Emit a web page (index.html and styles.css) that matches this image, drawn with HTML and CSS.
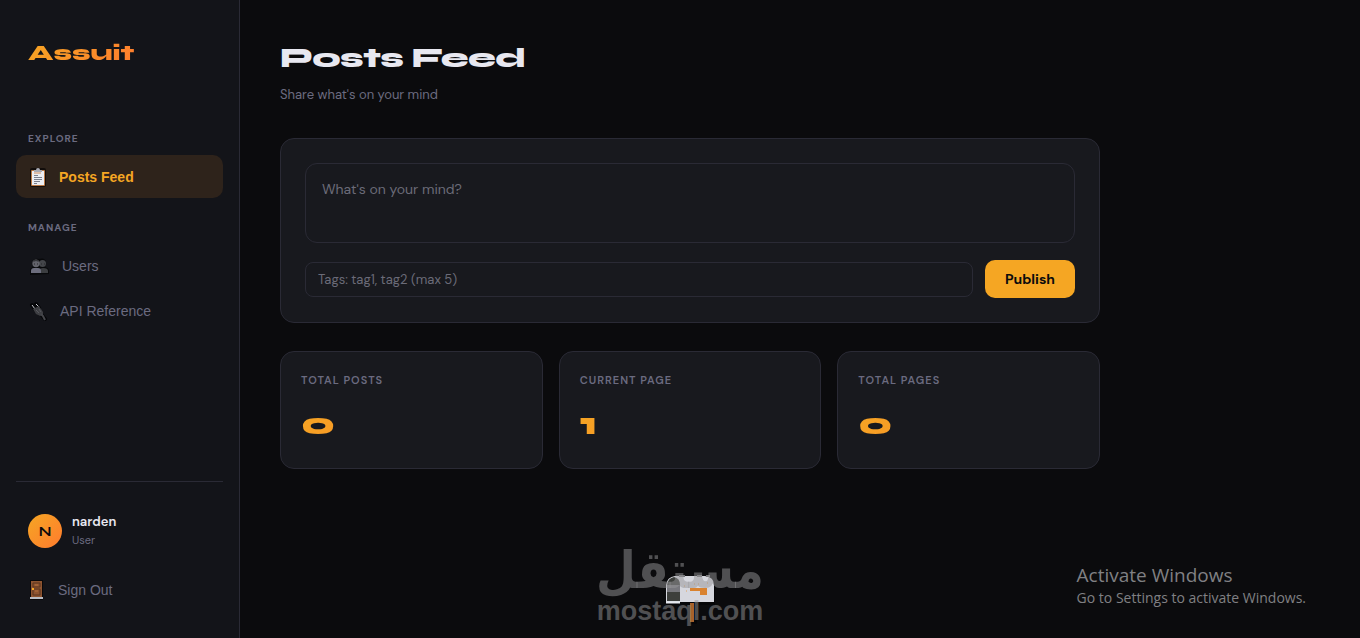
FILE: index.html
```html
<!DOCTYPE html>
<html lang="en">
<head>
    <meta charset="UTF-8">
    <title>Assuit - Posts Feed</title>
    <meta name="viewport" content="width=device-width, initial-scale=1.0">
    <link rel="stylesheet" href="styles.css">
</head>
<body>
    <div class="app">
        <aside class="sidebar">
            <div class="logo"><span class="gradient-text">Assuit</span></div>

            <nav class="nav">
                <div class="nav-label">Explore</div>
                <button type="button" class="nav-item active">
                    <svg width="19" height="20" viewBox="0 0 19 20">
                        <rect x="2" y="1" width="16" height="19" rx="2" fill="#120d0b"/>
                        <rect x="3" y="3" width="14" height="16" rx="1" fill="#b87845"/>
                        <rect x="4" y="4" width="12" height="14" fill="#eceef4"/>
                        <path d="M6 5V3h2q0-2 2-2t2 2h2v2z" fill="#a9abb5"/>
                        <path d="M6 6h7" stroke="#d08c5c"/>
                        <path d="M6 8.500h4M6 10.500h8M6 12.500h8M6 14.500h6M6 16.500h3" stroke="#7b7f8d"/>
                    </svg>
                    <span>Posts Feed</span>
                </button>

                <div class="nav-label">Manage</div>
                <button type="button" class="nav-item">
                    <svg width="22" height="18" viewBox="0 0 22 18">
                        <path d="M2 18v-4q0-3 3-4-1-2-1-4 1-5 7-4 6-2 7 3 0 3-1 5 4 1 4 4v3z" fill="#08090b"/>
                        <circle cx="14.500" cy="6.500" r="3.500" fill="#44464a"/>
                        <path d="M11 16v-3q1-2 4-2 5 0 5 3v2z" fill="#3c3e41"/>
                        <circle cx="8" cy="6.500" r="3.700" fill="#62636b"/>
                        <path d="M5 5q1-3 3-3t3 3l-3-1z" fill="#35363a"/>
                        <path d="M3 16v-2q0-3 3-3h4q3 0 3 3v2z" fill="#6c6d7d"/>
                        <path d="M6 7h1M9 7h1M13 7h1M16 7h1" stroke="#26272b"/>
                    </svg>
                    <span>Users</span>
                </button>
                <button type="button" class="nav-item">
                    <svg width="20" height="20" viewBox="0 0 20 20">
                        <path d="M4 4l3 4M8 3l3 4M7 8l5 5M12 12l5 6" stroke="#050608" stroke-width="4" stroke-linecap="round"/>
                        <path d="M4 4l3 4M8 3l3 3" stroke="#c9cad2" stroke-width="1"/>
                        <path d="M5 8l6-3 4 6 0 3-3 1-4-2z" fill="#3d3e42"/>
                        <path d="M13 13l2 2 2 4" stroke="#45464b" stroke-width="2" fill="none"/>
                        <path d="M8 9l3 3M11 8l2 3" stroke="#56575d"/>
                    </svg>
                    <span>API Reference</span>
                </button>
            </nav>

            <div class="sidebar-footer">
                <div class="user">
                    <div class="avatar">N</div>
                    <div class="user-info">
                        <div class="user-name">narden</div>
                        <div class="user-role">User</div>
                    </div>
                </div>
                <button type="button" class="nav-item">
                    <svg width="18" height="20" viewBox="0 0 18 20">
                        <rect x="2" y="0" width="13" height="20" fill="#08080a"/>
                        <rect x="3" y="1" width="11" height="16" fill="#8e5430"/>
                        <path d="M5 3h7v4H5zM5 9h7v6H5z" fill="none" stroke="#59341f"/>
                        <path d="M7 5h3M7 11h3" stroke="#b3713d"/>
                        <rect x="4" y="8" width="2" height="2" fill="#f5a623"/>
                        <path d="M2 18h13" stroke="#b9bdc4" stroke-width="2"/>
                    </svg>
                    <span>Sign Out</span>
                </button>
            </div>
        </aside>

        <main class="main">
            <header class="page-header">
                <h1>Posts Feed</h1>
                <p>Share what's on your mind</p>
            </header>

            <form class="card compose">
                <textarea class="compose-text" aria-label="Post text" placeholder="What's on your mind?"></textarea>
                <div class="compose-row">
                    <input type="text" class="tags-input" aria-label="Tags" placeholder="Tags: tag1, tag2 (max 5)">
                    <button type="button" class="publish-btn">Publish</button>
                </div>
            </form>

            <section class="stats">
                <div class="card stat">
                    <div class="stat-label">Total Posts</div>
                    <div class="stat-value gradient-text">0</div>
                </div>
                <div class="card stat">
                    <div class="stat-label">Current Page</div>
                    <div class="stat-value gradient-text">1</div>
                </div>
                <div class="card stat">
                    <div class="stat-label">Total Pages</div>
                    <div class="stat-value gradient-text">0</div>
                </div>
            </section>

            <div class="empty">
                <svg width="54" height="52" viewBox="0 0 54 52">
                    <path d="M3 30V11q0-8 7-9h33q9 1 9 9v20H34v19h-7V31H3z" fill="#060608"/>
                    <rect x="27" y="29" width="4" height="19" fill="#a8622b"/>
                    <path d="M3 28V11q1-8 9-9h30q9 1 9 9v17z" fill="#d6d7de"/>
                    <path d="M4 27V11q1-7 7-8 6 1 6 8v16z" fill="#3d3f3c"/>
                    <path d="M4 11h13v7H4z" fill="#77777d"/>
                    <path d="M3 28.500h14" stroke="#e6e8ee" stroke-width="2"/>
                    <path d="M27 14h17v7h-7v-4H27z" fill="#d9822f"/>
                    <path d="M16 2h6M34 2h5M43 2h4" stroke="#77777a" stroke-width="2"/>
                    <path d="M31 10h1M35 10h1M21 12h1M44 9h1M23 17h1" stroke="#e0a15c"/>
                </svg>
            </div>
        </main>
    </div>

    <div class="watermark">
        <div class="watermark-ar" lang="ar" dir="rtl">مستقل</div>
        <div class="watermark-en">mostaql.com</div>
    </div>

    <div class="activate">
        <div class="activate-title">Activate Windows</div>
        <div class="activate-text">Go to Settings to activate Windows.</div>
    </div>
</body>
</html>
```

FILE: styles.css
```css
* {
    box-sizing: border-box;
    margin: 0;
    padding: 0;
}
body {
    font-family: "DM Sans", Inter, sans-serif;
    background-color: #0b0b0d;
    color: #e8e8f0;
    overflow: hidden;
}
.app {
    display: flex;
    height: 100vh;
}
.gradient-text {
    background: linear-gradient(135deg, #f5a623, #ff7b2e);
    -webkit-background-clip: text;
    background-clip: text;
    color: transparent;
}

/* Sidebar */
.sidebar {
    width: 240px;
    flex-shrink: 0;
    display: flex;
    flex-direction: column;
    padding: 32px 16px 27px;
    background-color: #131419;
    border-right: 1px solid #2a2a35;
}
.logo {
    padding: 0 12px;
    font-family: Syne, "DejaVu Sans", sans-serif;
    font-size: 22px;
    font-weight: 800;
    line-height: 42px;
}
.nav {
    display: flex;
    flex-direction: column;
    gap: 2px;
    margin-top: 56px;
}
.nav-label {
    padding: 0 12px;
    margin-bottom: 5px;
    font-size: 10px;
    font-weight: 700;
    line-height: 18px;
    letter-spacing: 1px;
    text-transform: uppercase;
    color: #6b6b80;
}
.nav-item + .nav-label {
    margin-top: 19px;
}
.nav-item {
    display: flex;
    align-items: center;
    gap: 12px;
    width: 100%;
    height: 43px;
    padding: 0 12px;
    border: none;
    border-radius: 10px;
    background: none;
    color: #6b6b80;
    font-family: Arial, "Liberation Sans", sans-serif;
    font-size: 14px;
    text-align: left;
    cursor: pointer;
}
.nav-item.active {
    background-color: #2e231b;
    color: #f5a623;
    font-weight: bold;
}
.sidebar-footer {
    margin-top: auto;
    padding-top: 31px;
    border-top: 1px solid #2a2a35;
}
.user {
    display: flex;
    align-items: center;
    gap: 10px;
    padding: 0 12px;
    margin-bottom: 19px;
}
.avatar {
    display: flex;
    align-items: center;
    justify-content: center;
    width: 34px;
    height: 34px;
    border-radius: 50%;
    background: linear-gradient(135deg, #f5a623, #ff7b2e);
    color: #0b0b0d;
    font-family: Syne, "DejaVu Sans", sans-serif;
    font-size: 14px;
    font-weight: 700;
}
.user-name {
    font-size: 13px;
    font-weight: 600;
    line-height: 18px;
}
.user-role {
    font-size: 11px;
    line-height: 18px;
    color: #6b6b80;
}

/* Main content */
.main {
    flex: 1;
    max-width: 900px;
    padding: 40px;
}
.page-header {
    margin-bottom: 32px;
}
.page-header h1 {
    font-family: Syne, "DejaVu Sans", sans-serif;
    font-size: 28px;
    font-weight: 800;
    line-height: 36px;
    letter-spacing: -0.5px;
}
.page-header p {
    margin-top: 8px;
    font-size: 13px;
    line-height: 22px;
    color: #6b6b80;
}
.card {
    background-color: #18191e;
    border: 1px solid #2a2a35;
    border-radius: 14px;
}
.compose {
    padding: 24px;
}
.compose-text,
.tags-input {
    display: block;
    background: none;
    border: 1px solid #2a2a35;
    color: #e8e8f0;
    font-family: inherit;
}
.compose-text {
    width: 100%;
    height: 80px;
    padding: 14px 16px;
    border-radius: 12px;
    font-size: 14px;
    line-height: 22px;
    resize: none;
}
.tags-input {
    flex: 1;
    height: 35px;
    padding: 0 12px;
    border-radius: 8px;
    font-size: 13px;
}
.compose-text::placeholder,
.tags-input::placeholder {
    color: #6b6b78;
}
.compose-row {
    display: flex;
    align-items: center;
    gap: 12px;
    margin-top: 17px;
}
.publish-btn {
    height: 38px;
    padding: 0 20px;
    border: none;
    border-radius: 10px;
    background-color: #f5a623;
    color: #0b0b0d;
    font-family: inherit;
    font-size: 14px;
    font-weight: 700;
    cursor: pointer;
}
.stats {
    display: grid;
    grid-template-columns: repeat(3, 1fr);
    gap: 16px;
    margin-top: 28px;
}
.stat {
    padding: 20px 20px 24px;
}
.stat-label {
    font-size: 11px;
    font-weight: 600;
    line-height: 16px;
    letter-spacing: 1px;
    text-transform: uppercase;
    color: #6b6b80;
}
.stat-value {
    margin-top: 16px;
    font-family: Syne, "DejaVu Sans", sans-serif;
    font-size: 32px;
    font-weight: 800;
    line-height: 40px;
}
.empty {
    display: flex;
    justify-content: center;
    padding-top: 105px;
}

/* Overlays */
.watermark {
    position: absolute;
    left: 50%;
    bottom: 12px;
    transform: translateX(-50%);
    text-align: center;
    color: rgba(150, 150, 152, 0.5);
    pointer-events: none;
}
.watermark-ar {
    font-family: "DejaVu Sans Condensed", "DejaVu Sans", sans-serif;
    font-size: 51px;
    font-weight: 700;
    line-height: 50px;
}
.watermark-en {
    font-family: Arial, "Liberation Sans", sans-serif;
    font-size: 27px;
    font-weight: 700;
    line-height: 30px;
}
.activate {
    position: absolute;
    right: 54px;
    bottom: 29px;
    font-family: "Segoe UI", "Open Sans", sans-serif;
    color: #808083;
    pointer-events: none;
}
.activate-title {
    font-size: 19px;
    line-height: 24px;
}
.activate-text {
    font-size: 14px;
    line-height: 22px;
}
```
